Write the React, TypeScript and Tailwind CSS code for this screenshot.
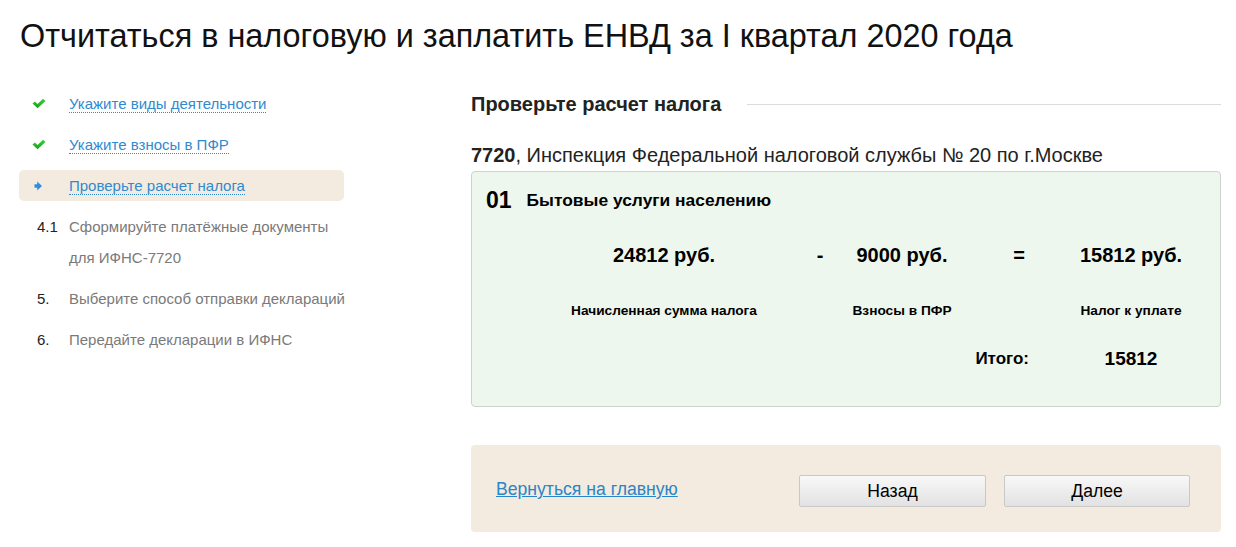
import React from "react";

function Check() {
  return (
    <svg width="14" height="11" viewBox="0 0 14 11" className="block">
      <defs>
        <linearGradient id="g" x1="0" y1="0" x2="0" y2="1">
          <stop offset="0" stopColor="#3fd33f" />
          <stop offset="1" stopColor="#12a012" />
        </linearGradient>
      </defs>
      <path d="M0.5 5.5 L3 3.5 L5.5 6 L11 0.8 L13.5 3 L5.5 10.2 Z" fill="url(#g)" />
    </svg>
  );
}

function Marker() {
  return (
    <svg width="9" height="10" viewBox="0 0 9 10" className="block">
      <path d="M0.5 3.2 L3.2 3.2 L3.2 0.5 L8 5 L3.2 9.5 L3.2 6.8 L0.5 6.8 Z" fill="#2f8ee0" />
    </svg>
  );
}

function NavLink({ children }: { children: React.ReactNode }) {
  return (
    <span className="text-[#2f8ad0] border-b border-dotted border-[#2f8ad0] leading-[17px] inline-block">
      {children}
    </span>
  );
}

export default function App() {
  return (
    <div
      className="w-[1236px] h-[547px] bg-white text-black overflow-hidden"
      style={{ fontFamily: '"Liberation Sans", Arial, sans-serif' }}
    >
      <h1 className="pl-[20px] pt-[17px] text-[32.4px] leading-[38px] font-normal text-[#111] whitespace-nowrap">
        Отчитаться в налоговую и заплатить ЕНВД за I квартал 2020 года
      </h1>
      <div className="flex mt-[33px]">
        {/* Left nav */}
        <div className="ml-[19px] w-[325px] shrink-0 flex flex-col gap-[10px] text-[15px]">
          <div className="flex items-center h-[31px]">
            <div className="w-[50px] shrink-0 pl-[13px]"><Check /></div>
            <NavLink>Укажите виды деятельности</NavLink>
          </div>
          <div className="flex items-center h-[31px]">
            <div className="w-[50px] shrink-0 pl-[13px]"><Check /></div>
            <NavLink>Укажите взносы в ПФР</NavLink>
          </div>
          <div className="flex items-center h-[31px] bg-[#f3ebdf] rounded-[5px]">
            <div className="w-[50px] shrink-0 pl-[15px]"><Marker /></div>
            <NavLink>Проверьте расчет налога</NavLink>
          </div>
          <div className="flex leading-[31px]">
            <div className="w-[50px] shrink-0 pl-[18px] text-[#222]">4.1</div>
            <div className="text-[#7a7a7a]">
              Сформируйте платёжные документы
              <br />
              для ИФНС-7720
            </div>
          </div>
          <div className="flex leading-[31px]">
            <div className="w-[50px] shrink-0 pl-[18px] text-[#222]">5.</div>
            <div className="text-[#7a7a7a] whitespace-nowrap">Выберите способ отправки деклараций</div>
          </div>
          <div className="flex leading-[31px]">
            <div className="w-[50px] shrink-0 pl-[18px] text-[#222]">6.</div>
            <div className="text-[#7a7a7a]">Передайте декларации в ИФНС</div>
          </div>
        </div>

        {/* Right column */}
        <div className="ml-[127px] w-[750px] shrink-0">
          <div className="flex items-center h-[32px]">
            <div className="text-[20px] font-bold text-[#222] whitespace-nowrap">Проверьте расчет налога</div>
            <div className="flex-1 ml-[26px] h-px bg-[#dcdcdc]" />
          </div>
          <div className="mt-[23px] text-[20px] leading-[24px] text-[#222] whitespace-nowrap">
            <b>7720</b>, Инспекция Федеральной налоговой службы № 20 по г.Москве
          </div>
          <div className="mt-[4px] border border-[#cdd3cd] bg-[#eef7ee] rounded-[4px] pt-[14px] pb-[33px]">
            <div className="flex items-center h-[28px] pl-[14px]">
              <span className="text-[23px] font-bold">01</span>
              <span className="ml-[15px] text-[17.4px] font-bold">Бытовые услуги населению</span>
            </div>
            <div className="flex mt-[27px] h-[28px] items-center text-[20px] font-bold pl-[92px] whitespace-nowrap">
              <div className="w-[200px] text-center">24812 руб.</div>
              <div className="ml-[36px] w-[40px] text-center">-</div>
              <div className="w-[124px] text-center">9000 руб.</div>
              <div className="ml-[35px] w-[40px] text-center">=</div>
              <div className="ml-[32px] w-[120px] text-center">15812 руб.</div>
            </div>
            <div className="flex mt-[32px] h-[20px] items-center text-[13.7px] font-bold pl-[92px] whitespace-nowrap">
              <div className="w-[200px] text-center">Начисленная сумма налога</div>
              <div className="ml-[36px] w-[40px]" />
              <div className="w-[124px] text-center">Взносы в ПФР</div>
              <div className="ml-[35px] w-[40px]" />
              <div className="ml-[32px] w-[120px] text-center">Налог к уплате</div>
            </div>
            <div className="flex mt-[24px] h-[28px] items-center font-bold pl-[92px] whitespace-nowrap">
              <div className="w-[200px]" />
              <div className="ml-[36px] w-[40px]" />
              <div className="w-[124px]" />
              <div className="w-[65px] text-[17px] text-right">Итого:</div>
              <div className="ml-[42px] w-[120px] text-center text-[19px]">15812</div>
            </div>
          </div>

          <div className="mt-[38px] h-[87px] bg-[#f3ebdf] rounded-[4px] flex items-start pt-[30px] pl-[25px] pr-[31px]">
            <a className="mt-[2px] text-[17.6px] leading-[24px] text-[#2a85c8] underline whitespace-nowrap">Вернуться на главную</a>
            <div className="ml-auto flex gap-[18px]">
              <button className="w-[187px] h-[32px] border border-[#c8c8c8] rounded-[2px] bg-gradient-to-b from-[#f8f8f8] to-[#e2e2e2] text-[17.6px] text-black">
                Назад
              </button>
              <button className="w-[186px] h-[32px] border border-[#c8c8c8] rounded-[2px] bg-gradient-to-b from-[#f8f8f8] to-[#e2e2e2] text-[17.6px] text-black">
                Далее
              </button>
            </div>
          </div>
        </div>
      </div>
    </div>
  );
}
